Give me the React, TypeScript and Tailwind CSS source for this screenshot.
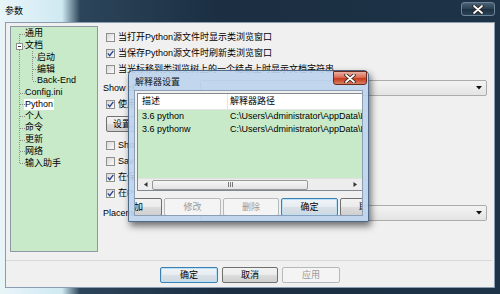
import React from 'react';

function CloseX() {
  return (
    <svg width="12" height="9" viewBox="0 0 12 9">
      <path d="M2 1 L10 8 M10 1 L2 8" stroke="#2a1c18" strokeWidth="3.4" strokeLinecap="round" />
      <path d="M2 1 L10 8 M10 1 L2 8" stroke="#ffffff" strokeWidth="1.8" strokeLinecap="round" />
    </svg>
  );
}

function Check({ on }: { on?: boolean }) {
  return (
    <div className="w-[9px] h-[9px] shrink-0 border border-[#8e8f8f] bg-[linear-gradient(135deg,#d8d8d8,#fbfbfb)] flex items-center justify-center">
      {on && (
        <svg width="7" height="7" viewBox="0 0 7 7">
          <path d="M0.8 3.4 L2.7 5.6 L6.3 0.9" fill="none" stroke="#26408f" strokeWidth="1.3" />
        </svg>
      )}
    </div>
  );
}

function CheckRow({ label, on }: { label: string; on?: boolean }) {
  return (
    <div className="h-[16px] flex items-center pl-[3px] gap-[3px] whitespace-nowrap">
      <Check on={on} />
      <span>{label}</span>
    </div>
  );
}

function Btn({ label, kind = 'normal', className = '' }: { label: string; kind?: 'normal' | 'primary' | 'disabled'; className?: string }) {
  const styles = {
    normal: 'border-[#707070] bg-[linear-gradient(#f2f2f2,#ebebeb_50%,#dddddd_50%,#cfcfcf)] text-black',
    primary: 'border-[#3c7fb1] bg-[linear-gradient(#f0f4f8,#e6ecf1_50%,#d9e1e8_50%,#cfd8e0)] shadow-[inset_0_0_0_1px_#b9e0f6] text-black',
    disabled: 'border-[#b5b9bc] bg-[#f4f4f4] text-[#9a9a9a]',
  };
  return (
    <div className={`shrink-0 flex items-center justify-center border rounded-[2px] whitespace-nowrap ${styles[kind]} ${className}`}>
      {label}
    </div>
  );
}

function Combo({ className = '' }: { className?: string }) {
  return (
    <div className={`h-[16px] border border-[#acacac] rounded-[2px] bg-[linear-gradient(#f3f3f3,#e4e4e4)] flex items-center justify-end pr-[4px] ${className}`}>
      <svg width="6" height="4" viewBox="0 0 6 4">
        <path d="M0 0 H6 L3 3.5 Z" fill="#111" />
      </svg>
    </div>
  );
}

const tree: { label: string; level: number; selected?: boolean }[] = [
  { label: '通用', level: 0 },
  { label: '文档', level: 0 },
  { label: '启动', level: 1 },
  { label: '编辑', level: 1 },
  { label: 'Back-End', level: 1 },
  { label: 'Config.ini', level: 0 },
  { label: 'Python', level: 0, selected: true },
  { label: '个人', level: 0 },
  { label: '命令', level: 0 },
  { label: '更新', level: 0 },
  { label: '网络', level: 0 },
  { label: '输入助手', level: 0 },
];

const rowH = 11.75;
const cy = (i: number) => 6.875 + rowH * i;

function TreeLines() {
  const ticks0 = [0, 1, 5, 6, 7, 8, 9, 10, 11];
  const ticks1 = [2, 3, 4];
  return (
    <svg className="absolute inset-0 pointer-events-none" width="86" height="224">
      <g stroke="#8c8c8c" strokeWidth="1" strokeDasharray="1 1" shapeRendering="crispEdges">
        <line x1="8.5" y1={cy(0)} x2="8.5" y2={cy(11)} />
        {ticks0.map((i) => (
          <line key={i} x1="8.5" y1={Math.round(cy(i)) + 0.5} x2="14" y2={Math.round(cy(i)) + 0.5} />
        ))}
        <line x1="21.5" y1={cy(1) + 5} x2="21.5" y2={cy(4)} />
        {ticks1.map((i) => (
          <line key={i} x1="21.5" y1={Math.round(cy(i)) + 0.5} x2="25" y2={Math.round(cy(i)) + 0.5} />
        ))}
      </g>
      <rect x="5.5" y={Math.round(cy(1)) - 2.5} width="6" height="6" fill="#fff" stroke="#919191" />
      <line x1="7" y1={Math.round(cy(1)) + 0.5} x2="10" y2={Math.round(cy(1)) + 0.5} stroke="#333" />
    </svg>
  );
}

export default function App() {
  return (
    <div className="w-[500px] h-[294px] overflow-hidden relative flex flex-col text-[9px] leading-[11px] text-black font-['Liberation_Sans','Noto_Sans_CJK_SC',sans-serif] bg-[linear-gradient(90deg,#e8f5f9_0px,#cfe9f2_62px,#2c455a_80px,#1b2e42_220px,#1e3347_100%)]">
      {/* title bar */}
      <div className="h-[22px] shrink-0 flex justify-between">
        <span className="pl-[5px] pt-[6px]">参数</span>
        <div className="mt-[2px] mr-[5px] w-[34px] h-[14px] rounded-[3px] border border-[#6f8397] bg-[linear-gradient(#4a6176,#2a3f52_50%,#1c3043_50%,#2b4458)] flex items-center justify-center">
          <CloseX />
        </div>
      </div>

      {/* body */}
      <div className="mx-[5px] h-[266px] shrink-0 bg-[#f0f0f0] border border-[#8a9db0] flex flex-col">
        <div className="flex pt-[3px] pl-[4px] pr-[7px]">
          <div className="w-[88px] h-[226px] shrink-0 border border-[#8d9aa6] bg-[#c9eac9] relative pt-[1px]">
            <TreeLines />
            {tree.map((t) => (
              <div
                key={t.label}
                className={`h-[11.75px] flex items-center whitespace-nowrap ${t.level === 0 ? 'pl-[13px]' : 'pl-[25px]'}`}
              >
                <span className={t.selected ? 'bg-white px-[1px] leading-[11px]' : 'px-[1px]'}>{t.label}</span>
              </div>
            ))}
          </div>

          <div className="flex-1 ml-[5px] pt-[3px] flex flex-col">
            <CheckRow label="当打开Python源文件时显示类浏览窗口" />
            <CheckRow label="当保存Python源文件时刷新类浏览窗口" on />
            <CheckRow label="当光标移到类浏览树上的一个结点上时显示文档字符串" />
            <div className="h-[16px] mt-[3px] flex items-center whitespace-nowrap">
              <span>Show cl</span>
              <Combo className="ml-auto w-[287px]" />
            </div>
            <CheckRow label="使用外" on />
            <Btn label="设置..." className="mt-[4px] ml-[3px] w-[48px] h-[16px] !justify-start pl-[6px]" />
            <div className="mt-[5px]">
              <CheckRow label="Show" />
            </div>
            <CheckRow label="Save" />
            <CheckRow label="在保存" on />
            <CheckRow label="在Py" on />
            <div className="h-[16px] mt-[4px] flex items-center whitespace-nowrap">
              <span>Placement</span>
              <Combo className="ml-auto w-[287px]" />
            </div>
          </div>
        </div>

        <div className="mt-[8px] mr-[2px] border-t border-[#d5d9dc]" />

        <div className="mt-[6px] pl-[154px] flex gap-[4px]">
          <Btn label="确定" kind="primary" className="w-[58px] h-[16px]" />
          <Btn label="取消" className="w-[56px] h-[16px]" />
          <Btn label="应用" kind="disabled" className="w-[58px] h-[16px]" />
        </div>
      </div>

      {/* interpreter dialog */}
      <div className="absolute left-[128px] top-[70px] w-[241px] h-[152px] rounded-t-[5px] border border-[#4f6a86] bg-[#bcd4ec]/90 shadow-[2px_4px_7px_rgba(0,0,0,0.55)] flex flex-col">
        <div className="h-[19px] shrink-0 flex items-center pl-[6px] pt-[3px] text-[#101820]">解释器设置</div>
        <div className="absolute top-[0px] right-[1px] w-[34px] h-[14px] rounded-b-[3px] border border-[#6a2b1d] bg-[linear-gradient(#eab0a2,#d96c52_45%,#c6391b_55%,#d88063)] flex items-center justify-center">
          <CloseX />
        </div>
        <div className="flex-1 mx-[5px] mb-[5px] bg-[#f0f0f0] border border-[#8ba0b6] overflow-hidden flex flex-col">
          <div className="mt-[2px] ml-[2px] w-[227px] h-[98px] shrink-0 border border-[#828790] flex flex-col overflow-hidden">
            <div className="h-[16px] bg-white border-b border-[#e5e5e5] flex items-center whitespace-nowrap">
              <div className="w-[90px] h-full border-r border-[#e5e5e5] pl-[4px] flex items-center">描述</div>
              <div className="pl-[2px]">解释器路径</div>
            </div>
            <div className="flex-1 bg-[#c9eac9] flex flex-col">
              {[
                ['3.6 python', 'C:\\Users\\Administrator\\AppData\\L'],
                ['3.6 pythonw', 'C:\\Users\\Administrator\\AppData\\L'],
              ].map(([a, b]) => (
                <div key={a} className="h-[13px] flex items-center whitespace-nowrap overflow-hidden">
                  <div className="w-[92px] shrink-0 pl-[4px]">{a}</div>
                  <div>{b}</div>
                </div>
              ))}
            </div>
            <div className="h-[12px] shrink-0 bg-[#ededed] border-t border-[#e0e0e0] flex items-center">
              <svg className="ml-[6px]" width="4" height="5" viewBox="0 0 4 5">
                <path d="M3.5 0 V5 L0 2.5 Z" fill="#333" />
              </svg>
              <div className="ml-[4px] w-[156px] h-[10px] rounded-[2px] border border-[#989898] bg-[linear-gradient(#f6f6f6,#e2e2e2)] flex items-center justify-center">
                <div className="flex gap-[1px]">
                  <div className="w-[1px] h-[5px] bg-[#777]" />
                  <div className="w-[1px] h-[5px] bg-[#777]" />
                  <div className="w-[1px] h-[5px] bg-[#777]" />
                </div>
              </div>
              <svg className="ml-auto mr-[6px]" width="4" height="5" viewBox="0 0 4 5">
                <path d="M0.5 0 V5 L4 2.5 Z" fill="#333" />
              </svg>
            </div>
          </div>
          <div className="mt-[7px] ml-[-29px] flex gap-[2px]">
            <Btn label="添加" className="w-[56px] h-[18px]" />
            <Btn label="修改" kind="disabled" className="w-[57px] h-[18px]" />
            <Btn label="删除" kind="disabled" className="w-[56px] h-[18px]" />
            <Btn label="确定" kind="primary" className="w-[57px] h-[18px]" />
            <Btn label="取消" className="w-[56px] h-[18px]" />
          </div>
        </div>
      </div>
    </div>
  );
}
